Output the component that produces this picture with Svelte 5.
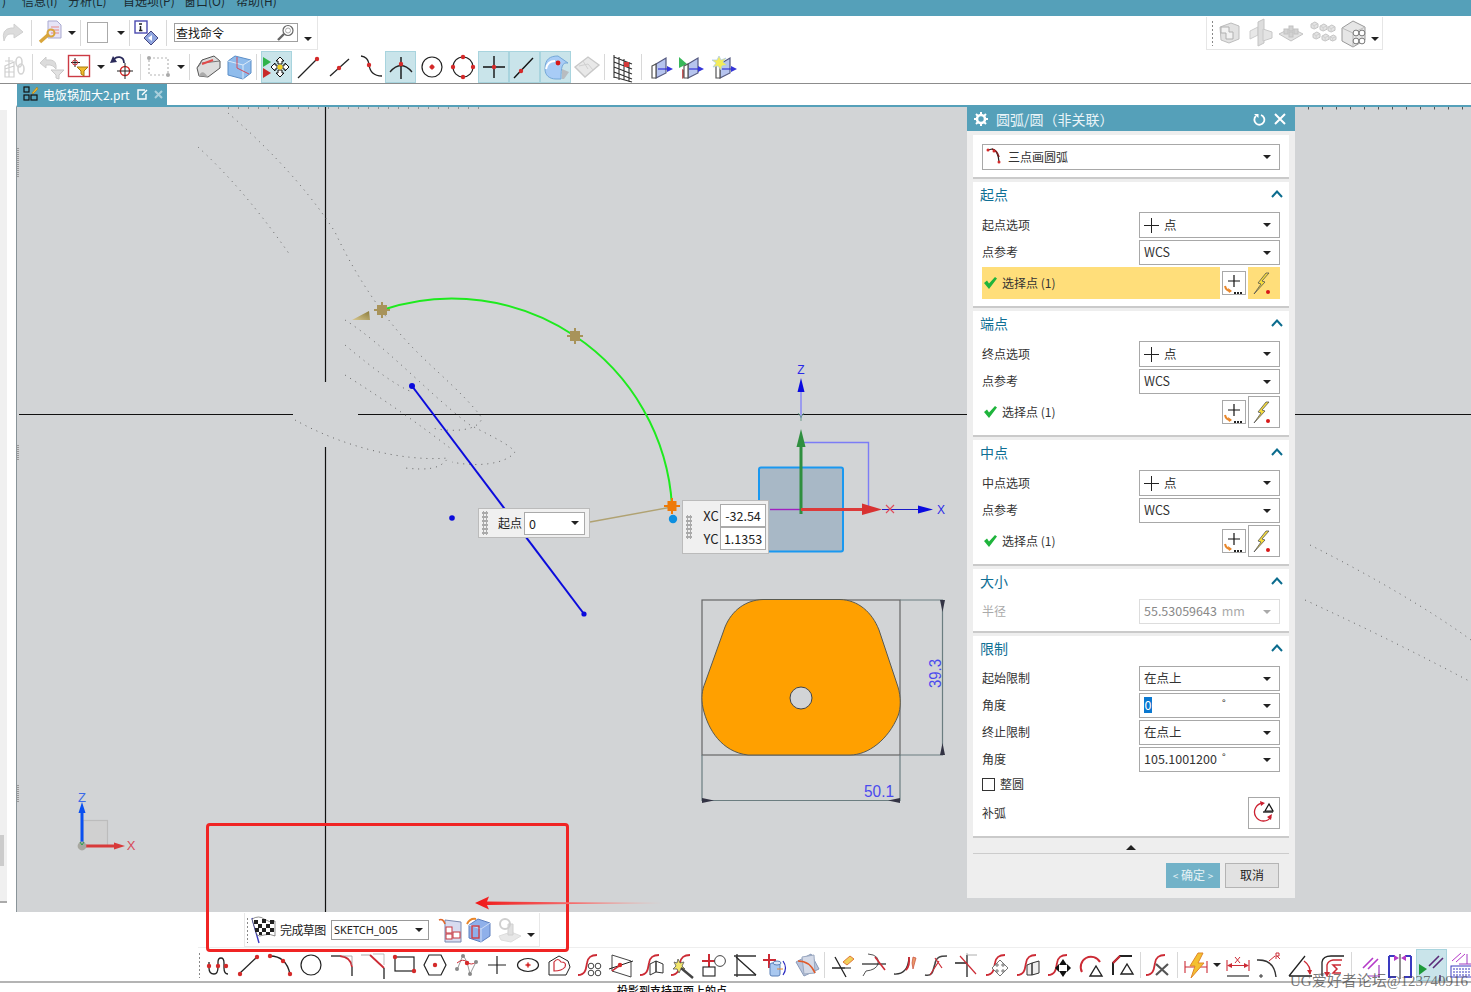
<script>
  const dot = (x, y, r = 2.2, c = '#d42a2a') => `<circle cx="${x}" cy="${y}" r="${r}" fill="${c}"/>`;
  const ln = (d, c = '#222', w = 1.3) => `<path d="${d}" fill="none" stroke="${c}" stroke-width="${w}"/>`;
  const red = '#cc2b35';
  const scurve = (x = 0) => ln(`M${x},22 C${x + 8},22 ${x + 8},15 ${x + 9},10 C${x + 10},4 ${x + 13},2 ${x + 19},2`, red, 1.8);
  const gcube = (x, y, s) => `<path d="M${x},${y + s * .3} L${x + s * .55},${y} L${x + s},${y + s * .25} V${y + s * .75} L${x + s * .45},${y + s} L${x},${y + s * .8}Z" fill="#e4e4e4" stroke="#c4c4c4"/><path d="M${x},${y + s * .3} L${x + s * .45},${y + s * .5} L${x + s},${y + s * .25} M${x + s * .45},${y + s * .5} V${y + s}" fill="none" stroke="#cfcfcf"/>`;
  const panel = (x) => `<path d="M${x},9 L${x + 10},3 V18 L${x},23Z" fill="#b6c4ee" stroke="#555a80" stroke-width="1.2"/><path d="M${x - 4},11 L${x},9 V23 H${x - 4}Z" fill="#fff" stroke="#555" stroke-width="1.2"/>`;
  const blueArrow = (x) => `<path d="M${x},14 H${x + 11}" stroke="#3535d8" stroke-width="1.2"/><path d="M${x + 9},11 L${x + 15},14 L${x + 9},17Z" fill="#3535d8"/>`;
  const tri = (x, y) => `<path d="M${x},${y} L${x + 6},${y + 10} H${x - 6}Z" fill="none" stroke="#222" stroke-width="1.4"/>`;

  const icons = {
    undo: `<path d="M3,20 Q0,8 10,7 H13 V3 L22,11 L13,17 V13 H9 Q5,13 3,20Z" fill="#dcdcdc" stroke="#d0d0d0"/>`,
    wrench: `<path d="M10,0H19L23,4V17H10Z" fill="#e6e4f6" stroke="#a9a9d0"/><path d="M13,6h8M13,9h8M13,12h8" stroke="#e88a8a"/>` + ln('M2,21 L11,13', '#d9a63c', 3.4) + `<circle cx="13" cy="12" r="3.5" fill="none" stroke="#d9a63c" stroke-width="2"/>`,
    blank: `<rect x="1.5" y="1.5" width="20" height="20" fill="#fff" stroke="#aaa"/>`,
    info: `<rect x="0" y="0" width="12" height="12" fill="#fff" stroke="#4a4ab0" stroke-width="1.4"/><path d="M4,3h3M5.5,5v4M4,9.5h3.4" stroke="#222" stroke-width="1.5"/><path d="M9,17 L16,10 L23,17 L16,24Z" fill="#8ea4de" stroke="#46467f"/><path d="M17,14 L13,17 L17,20Z" fill="#fff"/>`,
    hand: ln('M2,11 L11,7 V22 L2,22Z M2,17 H11 M6,9 V22 M2,14 L11,11', '#cfcfcf', 1.2) + ln('M6,2 V9 M2,6 H10', '#cfcfcf', 1.2) + `<ellipse cx="16" cy="7" rx="3" ry="5" fill="none" stroke="#d4d4d4" stroke-width="1.6"/><ellipse cx="18" cy="14" rx="3" ry="5" fill="none" stroke="#d4d4d4" stroke-width="1.6"/>`,
    undofun: `<path d="M0,8 L6,2 V5 H11 Q17,6 16,14 Q13,10 10,10 H6 V13Z" fill="#dcdcdc" stroke="#cdcdcd"/><path d="M11,15 H24 L19,20 V24 L16,23 V20Z" fill="#e2e2e2" stroke="#c8c8c8"/>`,
    filter: `<rect x="-0.5" y="0.5" width="21" height="21" fill="#fff" stroke="#cc3a44" stroke-width="1.4"/><path d="M6,3V12M2,7.5H11" stroke="#222"/><circle cx="6" cy="7.5" r="2.5" fill="none" stroke="#cc2b35"/><path d="M8,12 H19 L15,16 V21 L12,19 V16Z" fill="#f0bc2e" stroke="#a97a10"/>`,
    rotate: ln('M3,6 C6,0 14,1 14,8', '#2a2a5a', 1.8) + `<path d="M0,8 L3,1 L7,7Z" fill="#2a2a5a"/><circle cx="15" cy="16" r="4.6" fill="none" stroke="#d42a2a" stroke-width="1.5"/><path d="M15,8V24M7,16H23" stroke="#222"/>`,
    dashed: `<rect x="2" y="3" width="19" height="17" fill="none" stroke="#b5b5b5" stroke-width="1.2" stroke-dasharray="2 2"/>` + dot(2, 3, 2, '#aaa') + dot(21, 20, 2, '#aaa'),
    box: `<path d="M1,13 L6,5 L18,1 L24,6 V13 L12,22 L3,21Z" fill="#dcdcdc" stroke="#555"/><path d="M1,13 Q5,9 6,5 M6,8 L24,6" fill="none" stroke="#777"/><path d="M6,9 L17,5" stroke="#e24a4a" stroke-width="2"/><path d="M3,21 Q6,13 12,22" fill="#aaa"/>`,
    bcube: `<path d="M1,6 L8,1 L24,5 V18 L16,24 L1,20Z" fill="#8fbcec" stroke="#5b8ec8"/><path d="M1,6 L16,10 L24,5 M16,10 V24" fill="none" stroke="#dbeaf8"/><path d="M10,2 V13 L22,19" fill="none" stroke="#d44a5a"/>`,
    select: `<path d="M-2,2 L6,7 L-2,12Z" fill="#2fb34a"/><path d="M-2,13 L6,18 L-2,23Z" fill="#c82a2a"/><path d="M15,2 L19,6 H17 V9 H13 V6 H11Z M15,22 L19,18 H17 V15 H13 V18 H11Z M6,12 L10,8 V10 H12 V14 H10 V16Z M24,12 L20,8 V10 H18 V14 H20 V16Z" fill="#fff" stroke="#111"/>` + dot(15, 12, 2.6, '#f2d020'),
    lineEnd: ln('M2,23 L20,5') + dot(21, 4, 2.2),
    lineMid: ln('M3,21 L22,4') + dot(12, 13, 2.2),
    curve: ln('M3,1 Q10,2 11,9 Q12,21 24,21') + dot(11, 10, 2.2),
    arcTop: ln('M1,17 Q12,4 23,17') + ln('M12,2 V24', '#111', 1.4) + dot(12, 9, 2.2),
    circleC: `<circle cx="12" cy="12" r="10" fill="none" stroke="#222" stroke-width="1.2"/>` + dot(12, 12, 2.2) + ln('M12,9V15M9,12H15', '#d42a2a', .8),
    circle4: `<circle cx="12" cy="12" r="10" fill="none" stroke="#222" stroke-width="1.2"/>` + dot(12, 2, 2.2) + dot(12, 22, 2.2) + dot(2, 12, 2.2) + dot(22, 12, 2.2),
    cross: ln('M12,1V23M1,12H23', '#111', 1.4) + dot(12, 12, 2.2),
    lineAct: ln('M1,23 L20,3', '#111', 1.4) + dot(8, 16, 2.2),
    surface: `<path d="M1,14 C1,4 6,1 14,1 L24,8 C18,7 17,12 17,24 H12 C5,24 1,20 1,14Z" fill="#a8ccf6" stroke="#74a8d8"/><path d="M18,24 V14 L25,17 L20,24Z" fill="#b8bcc0"/><circle cx="14" cy="8" r="2.4" fill="#d81818"/><path d="M2,14 C3,8 7,6 11,6" stroke="#fff" stroke-width="2" fill="none"/>`,
    mesh: `<path d="M0,12 L13,2 L24,10 L10,22Z" fill="#e8e8e8" stroke="#c8c8c8" stroke-width="1.4"/><path d="M4,11 L13,9 L18,15 M8,6 L13,14" stroke="#d0d0d0" fill="none"/>`,
    grid: ln('M4,2 L22,9 M4,7 L22,14 M4,12 L22,19 M4,17 L22,24 M4,22 L22,27 M4,0 V23 M9,2 V25 M14,4 V25 M19,7 V27', '#333', 1.1) + `<rect x="14" y="7" width="5" height="5" fill="#d43a3a"/>`,
    move1: panel(6) + blueArrow(8),
    move2: `<path d="M0,2 L8,9 L0,13Z" fill="#38b85a"/><path d="M3,14 L11,18 L3,24Z" fill="#c85a5a"/>` + panel(9) + blueArrow(10),
    move3: panel(9) + `<path d="M8,1 L10,5 L15,3 L12,7 L16,10 L11,11 L10,15 L7,11 L2,12 L5,8 L1,5 L6,5Z" fill="#f4ec5a" stroke="#a8c8e8" stroke-width=".7"/>` + blueArrow(11),
    block1: `<path d="M2,6 L13,2 L21,5 V18 L11,22 L3,19Z" fill="#e2e2e2" stroke="#bdbdbd"/><path d="M3,6 H11 V11 L15,11 V18 L8,18 V12 H3Z" fill="#f2f2f2" stroke="#b0b0b0"/>`,
    block2: `<path d="M2,10 L10,6 V14 L2,18Z" fill="#e8e8e8" stroke="#ccc"/><path d="M10,1 L16,-2 V22 L10,25Z" fill="#ddd" stroke="#c4c4c4"/><path d="M15,8 L24,11 V17 L15,20Z" fill="#e4e4e4" stroke="#c8c8c8"/>`,
    block3: `<path d="M0,13 L12,7 L24,13 L12,20Z" fill="#e2e2e2" stroke="#c4c4c4"/>` + [[7, 8], [12, 5], [17, 8], [12, 11]].map(([x, y]) => `<rect x="${x - 2}" y="${y}" width="4" height="5" fill="#d2d2d2" stroke="#c2c2c2"/>`).join(''),
    block4: gcube(1, 1, 7) + gcube(10, 3, 7) + gcube(18, 4, 7) + gcube(3, 11, 7) + gcube(12, 13, 7) + gcube(20, 14, 6),
    block5: `<path d="M0,7 L11,0 L23,6 V19 L11,26 L0,20Z" fill="#e6e6e6" stroke="#999"/><path d="M0,7 L11,12 L23,6 M11,12 V26" fill="none" stroke="#bbb"/>` + [[14, 12], [20, 12], [14, 20], [20, 20]].map(([x, y]) => `<circle cx="${x}" cy="${y}" r="2.9" fill="#fff" stroke="#777"/>`).join(''),
    flag: `<path d="M1,2 L8,27" stroke="#3a3ac0" stroke-width="1.4"/><path d="M1,3 Q8,-1 13,3 T24,5 L24,20 Q18,17 13,19 T6,19Z" fill="#fff" stroke="#222" stroke-width=".5"/><path d="M3,4h4v4h-4zM11,3h4v4h-4zM19,4h4v4h-4zM7,8h4v4h-4zM15,8h4v4h-4zM4,12h4v4h-4zM11,12h4v4h-4zM19,12h4v4h-4zM8,16h3v3h-3zM15,16h4v3h-4z" fill="#222"/>`,
    map: `<path d="M8,2 L24,4 V24 H8Z" fill="#d8dcf0" stroke="#7a8ab0"/><rect x="9" y="9" width="6" height="6" fill="#fff" stroke="#c8343c"/><rect x="9" y="16" width="6" height="5" fill="#fff" stroke="#c8343c"/><rect x="16" y="14" width="7" height="6" fill="#fff" stroke="#c8343c"/><path d="M2,2 Q6,0 8,6" stroke="#e0662a" stroke-width="1.6" fill="none"/>`,
    cube3: `<path d="M2,7 L11,1 L23,5 V18 L14,24 L2,20Z" fill="#8fb0ea" stroke="#5e80c0"/><path d="M2,7 L14,11 L23,5 M14,11 V24" stroke="#cddcf6" fill="none"/><rect x="5" y="8" width="7" height="12" fill="none" stroke="#d43a3a" stroke-width="1.3"/><path d="M0,6 Q3,0 9,1" stroke="#e8862a" stroke-width="2" fill="none"/>`,
    gray3: `<path d="M2,18 L14,14 L24,18 L14,24 L4,22Z" fill="#e8e8e8" stroke="#ddd"/><path d="M11,6 H16 V17 H11Z" fill="#e0e0e0" stroke="#d0d0d0"/><circle cx="8" cy="6" r="5" fill="none" stroke="#cfcfcf" stroke-width="2"/>`,
    profile: ln('M3,9 V15 Q3,21 8,21 Q12,21 12,14 V9 Q12,5 15,5 Q18,5 18,10 V15 Q18,21 22,21', '#222', 1.3) + dot(3, 13) + dot(12, 13) + dot(20, 13),
    line: ln('M2,21 L20,4') + dot(3, 21) + dot(20, 4),
    arc: ln('M2,3 Q18,3 22,21') + dot(2, 3) + dot(15, 8) + dot(22, 21),
    circle: `<circle cx="12" cy="12" r="10" fill="none" stroke="#222" stroke-width="1.2"/>`,
    fillet: ln('M1,3 H10', '#222', 1.3) + ln('M10,3 Q21,4 22,14', red, 1.8) + ln('M22,14 V23', '#222', 1.3) + ln('M13,3 H22 V12', '#999', .8),
    chamfer: ln('M0,2 H9', '#bbb', 1.3) + ln('M9,2 L23,15', red, 1.8) + ln('M23,15 V26', '#222', 1.3) + ln('M12,1 H23 V12', '#aaa', .8),
    rect: `<rect x="3" y="4" width="19" height="14" fill="none" stroke="#222" stroke-width="1.2"/>` + dot(3, 4) + dot(22, 18),
    hex: `<path d="M6,2 H18 L23,12 L18,22 H6 L1,12Z" fill="none" stroke="#222" stroke-width="1.2"/>` + dot(12, 12),
    spline: ln('M3,17 L9,2 L13,9 L16,21 L22,9', '#999', 1) + ln('M3,10 Q9,5 13,9 T22,9', red, 1) + dot(9, 3, 2, '#888') + dot(3, 16, 2, '#888') + dot(16, 21, 2, '#888') + dot(22, 9, 2, '#888') + dot(13, 10),
    plus: ln('M12,3 V21 M3,12 H21', '#222', 1.2),
    ellipse: `<ellipse cx="12" cy="12" rx="10.5" ry="6.5" fill="none" stroke="#222" stroke-width="1.2"/>` + dot(12, 12, 1.8) + ln('M12,9V15M9,12H15', '#d42a2a', .8),
    conic: `<path d="M2,22 V9 L12,3 L21,8 L23,14 L19,22Z" fill="none" stroke="#222"/><path d="M7,9 Q11,4 14,9 Q20,9 18,14 Q15,18 7,18Z" fill="none" stroke="#cc2b35" stroke-width="1.2"/>`,
    s4: scurve(0) + [[13, 13], [20, 13], [13, 20], [20, 20]].map(([x, y]) => `<circle cx="${x}" cy="${y}" r="2.8" fill="#fff" stroke="#444"/>`).join(''),
    plane: `<path d="M3,2 L22,8 V24 L3,18Z" fill="none" stroke="#444"/>` + ln('M0,16 L24,8', '#222', 1) + ln('M3,18 Q8,14 12,12', red, 1.4) + dot(11, 12),
    sbox: scurve(0) + `<path d="M10,11 L16,8 V19 L10,22Z M16,8 L23,11 V20 L16,19Z" fill="#fff" stroke="#333"/>`,
    swand: scurve(0) + `<path d="M7,6 L9,10 L13,9 L11,13 L14,16 L10,16 L8,20 L6,16 L2,16 L5,13 L3,9 L6,10Z" fill="#f2e66a" stroke="#555" stroke-width=".8"/>` + ln('M10,15 L22,25', '#444', 2.4),
    pcr: ln('M7,1 V15 M0,8 H14', red, 2) + `<circle cx="18" cy="8" r="5.4" fill="#fff" stroke="#444"/><rect x="1" y="14" width="12" height="9" fill="#fff" stroke="#222" stroke-width="1.1"/>`,
    tback: ln('M1,3 H23 M1,22 H23 M4,1 V24', '#333', 1.3) + ln('M3,4 L23,22', '#222', 1.3),
    pcyl: ln('M5,1 V15 M-1,7 H12', red, 2) + `<rect x="6" y="10" width="10" height="13" rx="2" fill="#a9c8f0" stroke="#5a80b8"/><ellipse cx="13" cy="10" rx="4" ry="2" fill="#d8e6f8" stroke="#5a80b8"/><path d="M19,8 Q24,15 19,22" stroke="#2828c0" stroke-width="1.2" fill="none"/><path d="M13,16 H19" stroke="#e8862a"/>`,
    wrap: `<path d="M1,9 L16,1 L24,16 L9,23Z" fill="#b8c4dc" stroke="#8a9ab8"/><path d="M7,4 L19,2 L20,20 L9,21Z" fill="#d4dae8" stroke="#9aa8c0"/><path d="M3,8 Q15,8 20,20" stroke="#e05a2a" stroke-width="1.6" fill="none"/>`,
    trim: ln('M1,15 H14 M4,4 L15,24', '#222', 1.3) + ln('M14,15 H20', '#222', 1) + `<path d="M12,9 L19,3 L23,6 L16,12Z" fill="#f0cf5a" stroke="#e0783a"/>`,
    extend: ln('M6,1 Q18,2 16,11 Q14,17 4,18 L1,23', '#555', 1) + ln('M0,11 H24', '#222', 1.2) + ln('M13,4 L23,17', red, 1.6),
    mini: ln('M1,21 Q15,22 16,4', '#333', 1.3) + ln('M16,4 Q17,13 13,17', red, 1.8) + `<path d="M20,4 L23,5 L20,16 L19,10Z" fill="#e89a6a" stroke="#c84a3a" stroke-width=".7"/>`,
    ext2: ln('M1,22 C10,24 9,15 11,11 C12,4 16,3 23,3', '#444', 1.6) + ln('M6,22 L15,8 M11,5 L18,15', red, 1.2),
    inter: ln('M12,2 V24 M0,10 H12', '#222', 1.3) + ln('M12,2 H22 M12,2 V0', '#999', .8) + ln('M5,3 L21,21', red, 1.2),
    smove: scurve(0) + `<path d="M14,7 L18,11 H16 V13 H18 V11 L22,15 L18,19 V17 H16 V19 H18 L14,23 L10,19 H12 V17 H10 V19 L6,15 L10,11 V13 H12 V11 H10Z" fill="#fff" stroke="#777"/>`,
    scopy: scurve(0) + `<path d="M10,12 L15,10 V22 H10Z M15,10 L22,8 V20 L15,22Z" fill="#eee" stroke="#333"/>`,
    srot: scurve(0) + `<path d="M15,6 L19,12 H11Z M15,24 L19,18 H11Z M7,15 L11,11 V19Z M23,15 L19,11 V19Z" fill="#111"/>`,
    atri: `<path d="M3,19 A10,10 0 1 1 21,9" fill="none" stroke="${red}" stroke-width="2"/>` + tri(17, 13),
    cham2: ln('M3,22 V10 L10,3 H22', '#222', 2) + ln('M3,10 L10,3', red, 2) + tri(17, 11),
    sx: scurve(0) + ln('M10,11 L22,22 M10,22 L22,11', '#555', 2.2),
    bolt: ln('M1,8 V20 M23,8 V20 M1,14 H23', red, 1.1) + `<path d="M14,0 L6,13 H11 L7,25 L20,10 H14 L19,0Z" fill="#f4c030" stroke="#e0862a"/>`,
    dimx: ln('M1,7 V18 M23,7 V18 M3,12.5 H21', red, 1.1) + ln('M1,23 H23', '#333', 1.2) + `<path d="M1,12.5 L6,10 V15Z M23,12.5 L18,10 V15Z" fill="#cc2b35"/>` + ln('M9,4 L14,10 M14,4 L9,10', red, 1),
    radius: ln('M1,7 Q18,6 20,24', '#333', 1.4) + ln('M13,8 L19,3', red, 1) + ln('M3,23 H7 M5,21 V25', '#333', 1) + ln('M20,0 V6 M20,0 H23 V3 H20 M21,3 L24,6', red, 1),
    angle: ln('M1,23 L17,3 M1,23 H24', '#222', 1.3) + ln('M16,8 Q23,13 22,21', red, 1.4) + `<path d="M22,22 L19,17 L24,17Z" fill="#cc2b35"/>`,
    sigma: ln('M2,23 V9 Q3,3 11,3 H24', '#222', 1.3) + ln('M7,22 V12 Q8,8 13,7 H22', red, 1.4) + ln('M21,12 H13 L17,16 L13,20 H21', red, 1.5) + `<path d="M7,24 L4,19 H10Z" fill="#cc2b35"/>`,
    parallel: ln('M5,15 L15,5 M10,16 L20,6', '#b53ac8', 1.6) + ln('M10,23 H22 M21,12 V23', '#a03ac0', 1.2) + ln('M21,23 V25', '#222', 1),
    perp: ln('M1,3 V24 H8 M1,3 H7 M23,3 V24 H16 M23,3 H17', '#3a3ac0', 2) + ln('M12,1 V26', '#222', 1) + `<path d="M6,2 L11,5 L6,8Z M18,2 L13,5 L18,8Z" fill="#b53ac8"/>`,
    sketchA: `<path d="M-1,11 L7,16 L-1,22Z" fill="#1e9a3a"/>` + ln('M9,13 L19,3 M13,15 L23,5', '#5a2a78', 1.6) + ln('M20,22 V28', '#5a2a78', 1.4),
    key: ln('M1,8 L10,0 M5,9 L14,1', '#b53ac8', 1) + ln('M8,11 H20 M16,1 V11', '#a03ac0', 1) + `<rect x="0" y="13" width="24" height="11" fill="#fff" stroke="#3a3ac0"/><path d="M2,16h20M2,19h20M2,22h20" stroke="#3a3ac0" stroke-dasharray="2 1"/>`,
    arcSel: ln('M1,2 L5,1 Q11,2 12,14', '#222', 1.2) + ln('M5,1 Q10,2 12,9', '#7a1c1c', 1.6) + dot(1, 2, 1.5) + dot(7, 3, 1.5) + dot(12, 14, 1.5),
    check: `<path d="M0,6 L3,3.5 L5,6.5 L11,0 L13,1.5 L5,12Z" fill="#1fb43c"/>`,
    addp: ln('M9,1 V13 M3,7 H15', '#111', 1.2) + `<path d="M0,12 Q1,17 6,17" stroke="#e8862a" stroke-width="2" fill="none"/><path d="M3,14 L7,17 L4,19Z" fill="#e8862a"/>` + `<path d="M9,18h2v2h-2zM12,18h2v2h-2zM15,18h2v2h-2z" fill="#222"/>`,
    bolt2: `<path d="M12,0 L4,10 L7,11 L0,21 L11,9 L8,8 L15,0Z" fill="#f6dc3a" stroke="#555" stroke-width=".8"/>` + dot(14, 19, 2, '#d81818'),
    comp: `<path d="M11,2 A9,9 0 1 0 19,16" fill="none" stroke="#cc2030" stroke-width="1.3"/><path d="M8,0 L13,2 L9,5Z M15,16 L20,13 L19,19Z" fill="#cc2030"/><path d="M13,10 L17,3 L21,10Z" fill="none" stroke="#111" stroke-width="1.2"/><path d="M11,11 H21" stroke="#111" stroke-width="1.3"/>`,
    tabI: `<rect x="0" y="0" width="5" height="5" fill="none" stroke="#111" stroke-width="1.2"/><rect x="0" y="8" width="5" height="5" fill="none" stroke="#111" stroke-width="1.2"/><rect x="7" y="8" width="6" height="5" fill="none" stroke="#111" stroke-width="1.2"/><path d="M8,6 L13,0 L14,2 L9,7Z" fill="#e8b830" stroke="#a87010" stroke-width=".5"/>`,
    mag: `<circle cx="11" cy="6.5" r="5" fill="#fff" stroke="#666" stroke-width="1.2"/><circle cx="11" cy="6.5" r="2.5" fill="none" stroke="#aaa"/>` + ln('M7,10 L1,16', '#666', 2.4)
  };

  const row1 = [['undo', 26], ['s', 10], ['wrench', 28], ['dd', 16], ['s', 1], ['blank', 34], ['dd', 12], ['s', 4], ['info', 32], ['s', 6]];
  const row2 = [['hand', 30], ['s', 5], ['undofun', 34], ['filter', 24], ['dd', 16], ['rotate', 26], ['s', 10], ['dashed', 28], ['dd', 16], ['s', 1], ['box', 36], ['bcube', 26], ['s', 9],
    ['select', 31, 1], ['lineEnd', 31], ['lineMid', 31], ['curve', 31], ['arcTop', 31, 1], ['circleC', 31], ['circle4', 31], ['cross', 31, 1], ['lineAct', 31, 1], ['surface', 31, 1], ['mesh', 31],
    ['s', 5], ['grid', 30], ['s', 8], ['move1', 34], ['move2', 24], ['move3', 40]];
  const rightTools = [['block1', 31], ['block2', 30], ['block3', 31], ['block4', 32], ['block5', 32], ['dd', 10]];
  const finishTools = [['map', 30], ['cube3', 30], ['gray3', 30], ['dd', 14]];
  const sketchTools = [['profile', 31], ['line', 31], ['arc', 31], ['circle', 31], ['fillet', 31], ['chamfer', 31], ['rect', 31], ['hex', 31], ['spline', 31], ['plus', 31], ['ellipse', 31], ['conic', 31], ['s4', 31], ['plane', 31], ['sbox', 31], ['swand', 31], ['pcr', 31], ['tback', 31], ['pcyl', 31], ['wrap', 31],
    ['s', 5], ['trim', 31], ['extend', 31], ['mini', 31], ['ext2', 31], ['inter', 31], ['smove', 31], ['scopy', 31], ['srot', 31], ['atri', 31], ['cham2', 31],
    ['s', 6], ['sx', 29], ['s', 10], ['bolt', 28], ['dd', 14], ['dimx', 28], ['radius', 31], ['angle', 34], ['sigma', 30], ['s', 8], ['parallel', 29], ['perp', 32], ['sketchA', 31, 1], ['key', 31]];

  // label, slot width so the items land where the real menu has them
  const menus = [['信息(I)', 46], ['分析(L)', 55], ['首选项(P)', 61], ['窗口(O)', 52], ['帮助(H)', 40]];
  const pointSections = [
    { title: '起点', option: '起点选项', hot: true },
    { title: '端点', option: '终点选项' },
    { title: '中点', option: '中点选项' }
  ];
</script>

{#snippet icon(name, size = 24)}
  <svg class="icon" width={size} height={size} viewBox="0 0 {size} {size}">{@html icons[name]}</svg>
{/snippet}

{#snippet tools(items)}
  {#each items as [name, width, active]}
    {#if name === 's'}
      <span class="sep" style="width:{width}px"></span>
    {:else if name === 'dd'}
      <span class="dd" style="width:{width}px"><i class="caret"></i></span>
    {:else}
      <span class="tool" class:active style="width:{width}px">{@render icon(name)}</span>
    {/if}
  {/each}
{/snippet}

{#snippet sel(text, cross = false, short = true)}
  <div class="sel" class:tall={!short}>
    {#if cross}<span class="cross"></span>{/if}
    <span class="val">{text}</span>
    <i class="caret"></i>
  </div>
{/snippet}

{#snippet head(title)}
  <div class="head"><span>{title}</span>
    <svg width="12" height="8" viewBox="0 0 12 8"><path d="M1,7 L6,1.5 L11,7" fill="none" stroke="#0b6c8e" stroke-width="2"/></svg>
  </div>
{/snippet}

<div class="app">
  <div class="menu">
    <span class="stub">)</span>
    {#each menus as [m, w]}<span style="width:{w}px">{m}</span>{/each}
  </div>

  <div class="row1">
    <div class="group left">
      {@render tools(row1)}
      <div class="search"><span>查找命令</span><span class="mag">{@render icon('mag', 18)}</span></div>
      <span class="dd low"><i class="caret"></i></span>
    </div>
    <div class="group right">
      <span class="grip"></span>
      {@render tools(rightTools)}
    </div>
  </div>

  <div class="row2">{@render tools(row2)}</div>

  <div class="tabs">
    <div class="tab">
      {@render icon('tabI', 15)}
      <span class="tabname">电饭锅加大2.prt</span>
      <svg width="11" height="11" viewBox="0 0 11 11"><path d="M8,1 H1 V10 H9 V5" fill="none" stroke="#fff" stroke-width="1.4"/><path d="M5,6 L10,1" stroke="#fff" stroke-width="1.4"/></svg>
      <svg class="tabx" width="9" height="9" viewBox="0 0 9 9"><path d="M1,1 L8,8 M8,1 L1,8" stroke="#a9cfdc" stroke-width="2"/></svg>
    </div>
  </div>

  <div class="main">
    <div class="side"><div class="sidepanel"><b></b></div></div>
    <div class="view">
      <svg class="canvas" width="1454" height="805" viewBox="17 107 1454 805">
        <defs>
          <linearGradient id="cone" x1="0" x2="1" y1="1" y2="0"><stop offset="0" stop-color="#d8c890"/><stop offset="1" stop-color="#8a7a3a"/></linearGradient>
        </defs>
        <path d="M228,108 H485" stroke="#555" stroke-dasharray="1 9"/>
        <path d="M1308,108 H1471" stroke="#555" stroke-width="3" stroke-dasharray="1 13"/>
        <!-- sketch axes -->
        <path d="M19,414.5 H293 M358,414.5 H1471 M325.5,107 V382 M325.5,447 V912" stroke="#111" stroke-width="1.2"/>
        <path d="M18,148 V178 M18,445 V460 M18,785 V802" stroke="#999" stroke-width="2" stroke-dasharray="1 1"/>

        <!-- faded reference curves -->
        <g fill="none" stroke="#666" stroke-width="1" stroke-dasharray="1 5">
          <path d="M228,113 C262,142 305,185 335,232 C355,275 385,320 415,350 C440,375 465,395 482,418 C478,432 450,432 432,428"/>
          <path d="M198,147 C232,178 262,215 290,255"/>
          <path d="M345,320 C385,345 430,395 470,425 C495,438 510,445 515,452 C505,465 475,467 452,462"/>
          <path d="M345,345 C375,370 395,385 412,392"/>
          <path d="M295,420 C340,445 400,462 448,458 C440,470 425,470 405,468"/>
          <path d="M345,375 C385,400 420,425 450,448"/>
          <path d="M1310,545 C1370,575 1430,610 1471,640"/>
          <path d="M1305,600 C1370,630 1420,655 1471,682"/>
        </g>

        <!-- construction line -->
        <path d="M412,386 L584,614" stroke="#0b0bdc" stroke-width="2"/>
        <circle cx="412" cy="386" r="3" fill="#0b0bdc"/>
        <circle cx="584" cy="614" r="2.6" fill="#0b0bdc"/>
        <circle cx="452" cy="518" r="2.8" fill="#0b0bdc"/>

        <!-- arc being drawn -->
        <path d="M382,310 A220.3,220.3 0 0 1 575,336 A220.3,220.3 0 0 1 672,506" fill="none" stroke="#1eea1e" stroke-width="2"/>
        <path d="M590,522 L672,507" stroke="#b0a272" stroke-width="1.4"/>
        <path d="M352,320 L369,311 L370,320Z" fill="url(#cone)"/>
        <g fill="#a8935a">
          <path d="M377,305h10v10h-10zM381,302h2v16h-2zM374,309h16v2h-16z"/>
          <path d="M570,331h10v10h-10zM574,328h2v16h-2zM567,335h16v2h-16z"/>
        </g>
        <path d="M667.500,501h9v10h-9zM671,498h2v16h-2zM664,505h16v2h-16z" fill="#ee7a08"/>
        <circle cx="673" cy="519" r="4.200" fill="#0d8fe0"/>

        <!-- drag handles on the origin -->
        <rect x="759" y="467.500" width="84" height="84" rx="2" fill="#a8b8c6" stroke="#1a98f0" stroke-width="2"/>
        <path d="M801,442.500 H868.500 V509" fill="none" stroke="#7c7cf6" stroke-width="1.400"/>
        <path d="M770,509.500 H801" stroke="#a020c0" stroke-width="1.400"/>
        <path d="M801,418 V392" stroke="#9b9bee" stroke-width="2"/>
        <path d="M797.500,392 L801,378 L804.500,392Z" fill="#0a0ae0"/>
        <path d="M801,514 V445" stroke="#2f8f3f" stroke-width="3"/>
        <path d="M796.500,447 L801,429 L805.500,447Z" fill="#2f8f3f"/>
        <path d="M801,509.500 H868" stroke="#dc3a3a" stroke-width="3"/>
        <path d="M862,503.500 L882,509.500 L862,515Z" fill="#d83232"/>
        <path d="M882,509.500 H920" stroke="#1a1ac8" stroke-width="1.200"/>
        <path d="M918,505.500 L933,509.500 L918,513.500Z" fill="#0a0ae0"/>
        <path d="M886,505 L894,513 M894,505 L886,513" stroke="#e04a5a" stroke-width="1.200"/>
        <path d="M798,413 L801,417 L804,413 M801,417 V421" fill="none" stroke="#6a9a8a" stroke-width="1"/>
        <text x="801" y="374" class="axis blue">Z</text>
        <text x="941" y="514" class="axis blue">X</text>

        <!-- profile and its dimensions -->
        <rect x="702" y="600" width="198" height="155" fill="none" stroke="#666" stroke-width="1.200"/>
        <path d="M763,599.500 H840 C858,600 872,612 879,630 L898,687 C901,697 901,708 898,716 C888,740 868,755 850,755 H748 C722,752 708,730 703,708 C701,698 702,690 705,683 L725,627 C732,610 746,600 763,599.500Z" fill="#ffa000" stroke="#5a5a50" stroke-width="1"/>
        <circle cx="801" cy="698" r="11" fill="#d2d4d6" stroke="#444" stroke-width="1"/>
        <path d="M900,600 H942.500 V755 H900 M702,755 V800.500 H900 V755" fill="none" stroke="#6b7d80" stroke-width="1.200"/>
        <path d="M940,600 h5 l-2.500,12Z M940,755 h5 l-2.500,-12Z M702,798 v5 l12,-2.500Z M900,798 v5 l-12,-2.500Z" fill="#334"/>
        <text class="dim" x="864" y="797" textLength="30" lengthAdjust="spacingAndGlyphs">50.1</text>
        <text class="dim" transform="translate(941,688) rotate(-90)" textLength="29" lengthAdjust="spacingAndGlyphs">39.3</text>

        <!-- wcs triad -->
        <rect x="83" y="820.500" width="24.500" height="25" fill="#d0d0d0" stroke="#bcbcbc" stroke-width="1.200"/>
        <path d="M82,846 V810" stroke="#0a50f0" stroke-width="3"/>
        <path d="M78.500,813 L82,802 L85.500,813Z" fill="#0a50f0"/>
        <path d="M82,846 H117" stroke="#d83a3a" stroke-width="3"/>
        <path d="M114,842.500 L125,846 L114,849.500Z" fill="#d83a3a"/>
        <circle cx="82" cy="846" r="4.400" fill="#a8a8a0"/>
        <path d="M80,842 L82,845 L84,842" fill="none" stroke="#2aa04a"/>
        <text x="82" y="802" class="axis small">Z</text>
        <text x="131" y="850" class="axis smallred">X</text>
      </svg>

      <div class="pop startpop">
        <span class="gripv"></span>
        <span class="poplab">起点</span>
        <div class="popinput wide"><span>0</span><i class="caret"></i></div>
      </div>

      <div class="pop xypop">
        <span class="gripv"></span>
        <div class="xy">
          <div class="xyrow"><span class="poplab">XC</span><div class="popinput">-32.54</div></div>
          <div class="xyrow"><span class="poplab">YC</span><div class="popinput">1.1353</div></div>
        </div>
      </div>

      <div class="dialog">
        <div class="title">
          <svg width="16" height="16" viewBox="0 0 16 16"><circle cx="8" cy="8" r="4" fill="none" stroke="#fff" stroke-width="2.600"/><path d="M8,1 V4 M8,12 V15 M1,8 H4 M12,8 H15 M3,3 L5,5 M11,11 L13,13 M13,3 L11,5 M5,11 L3,13" stroke="#fff" stroke-width="2"/></svg>
          <span class="tname">圆弧/圆（非关联）</span>
          <svg class="refresh" width="13" height="13" viewBox="0 0 13 13"><path d="M3,3 A5,5 0 1 0 8,2" fill="none" stroke="#fff" stroke-width="1.800"/><path d="M1,1 L5.500,1 L5.500,5Z" fill="#fff"/></svg>
          <svg width="12" height="12" viewBox="0 0 12 12"><path d="M1,1 L11,11 M11,1 L1,11" stroke="#fff" stroke-width="2"/></svg>
        </div>

        <section class="sec first">
          <div class="sel tall full">
            <span class="selicon">{@render icon('arcSel', 16)}</span>
            <span class="val cjk">三点画圆弧</span>
            <i class="caret"></i>
          </div>
        </section>

        {#each pointSections as s}
          <section class="sec">
            {@render head(s.title)}
            <div class="rows">
              <div class="row"><span>{s.option}</span>{@render sel('点', true, false)}</div>
              <div class="row"><span>点参考</span>{@render sel('WCS')}</div>
              <div class="row pick">
                <div class="picked" class:hot={s.hot}>
                  <span class="chk">{@render icon('check', 14)}</span>
                  <span class="pname">选择点 (1)</span>
                </div>
                <div class="add">{@render icon('addp', 18)}</div>
                <div class="snap" class:hot={s.hot}>{@render icon('bolt2', 20)}</div>
              </div>
            </div>
          </section>
        {/each}

        <section class="sec">
          {@render head('大小')}
          <div class="rows">
            <div class="row off">
              <span>半径</span>
              <div class="sel dis"><span class="val">55.53059643 <em>mm</em></span><i class="caret"></i></div>
            </div>
          </div>
        </section>

        <section class="sec">
          {@render head('限制')}
          <div class="rows">
            <div class="row"><span>起始限制</span>{@render sel('在点上')}</div>
            <div class="row"><span>角度</span>
              <div class="sel"><span class="val num"><mark>0</mark><sup>°</sup></span><i class="caret"></i></div>
            </div>
            <div class="row"><span>终止限制</span>{@render sel('在点上')}</div>
            <div class="row"><span>角度</span>
              <div class="sel"><span class="val num"><b>105.1001200</b><sup>°</sup></span><i class="caret"></i></div>
            </div>
            <div class="row chkrow"><i class="box"></i><span>整圆</span></div>
            <div class="row pick"><span>补弧</span><div class="snap">{@render icon('comp', 24)}</div></div>
          </div>
        </section>

        <div class="more"><i></i></div>
        <div class="foot">
          <button class="ok"><small>&lt;</small> 确定 <small>&gt;</small></button>
          <button class="cancel">取消</button>
        </div>
      </div>
    </div>
  </div>

  <div class="bottom">
    <div class="finishrow">
      <div class="finish">
        <span class="grip"></span>
        <span class="flag">{@render icon('flag', 26)}</span>
        <span class="fin">完成草图</span>
        <div class="sketchsel"><span>SKETCH_005</span><i class="caret"></i></div>
        {@render tools(finishTools)}
      </div>
    </div>
    <div class="sketchrow">
      <span class="grip"></span>
      {@render tools(sketchTools)}
    </div>
    <div class="status">投影到支持平面上的点</div>
  </div>

  <div class="callout"></div>
  <svg class="callarrow" width="200" height="20" viewBox="470 893 200 20">
    <defs>
      <linearGradient id="fade" x1="0" x2="1" y1="0" y2="0"><stop offset="0" stop-color="#f01818"/><stop offset="0.500" stop-color="#f46a6a"/><stop offset="1" stop-color="#f4b0a8"/></linearGradient>
    </defs>
    <path d="M475,903 L489,896.500 L487,901.500 L663,903 L487,905 L489,909.500Z" fill="url(#fade)"/>
  </svg>
  <div class="mark">UG爱好者论坛@123740916</div>
</div>

<style>
  :global(body) {
    margin: 0;
    background: #fff;
  }
  .app {
    position: relative;
    width: 1471px;
    height: 992px;
    overflow: hidden;
    display: flex;
    flex-direction: column;
    background: #fff;
    color: #333;
    font-family: "Noto Sans CJK SC", "Noto Sans", sans-serif;
    font-size: 12px;
  }
  .icon {
    display: block;
    overflow: visible;
    flex: none;
  }
  .caret {
    display: block;
    flex: none;
    width: 0;
    height: 0;
    border-left: 4px solid transparent;
    border-right: 4px solid transparent;
    border-top: 4px solid #222;
  }

  /* top bars */
  .menu {
    height: 16px;
    flex: none;
    background: #55a0b9;
    display: flex;
    padding-left: 22px;
    overflow: hidden;
    font-size: 12px;
    line-height: 13px;
    color: #1a2a30;
  }
  .menu span {
    flex: none;
    margin-top: -6px;
    height: 13px;
    white-space: nowrap;
  }
  .menu .stub {
    position: absolute;
    left: 2px;
  }
  .row1 {
    height: 34px;
    flex: none;
    display: flex;
    justify-content: space-between;
    padding-right: 88px;
  }
  .group {
    display: flex;
    align-items: center;
    box-sizing: border-box;
    height: 34px;
    border-bottom: 1px solid #e6e6e6;
  }
  .group.left {
    width: 318px;
    border-right: 1px solid #e6e6e6;
  }
  .group.right {
    width: 177px;
    height: 33px;
    margin-top: 1px;
    border: 1px solid #e6e6e6;
    border-top: 0;
    padding-left: 4px;
  }
  .row2 {
    height: 33px;
    flex: none;
    display: flex;
    align-items: center;
    box-sizing: content-box;
    border-bottom: 1px solid #8c8c8c;
  }
  .tool {
    flex: none;
    height: 32px;
    display: flex;
    align-items: center;
    justify-content: center;
    box-sizing: border-box;
  }
  .tool.active {
    background: #c9e4ea;
    border: 1px solid #a8d4de;
  }
  .sep {
    flex: none;
    display: flex;
    justify-content: center;
  }
  .sep::before {
    content: "";
    flex: none;
    width: 1px;
    height: 26px;
    background: #d8d8d8;
  }
  .dd {
    flex: none;
    display: flex;
    justify-content: center;
  }
  .dd.low {
    width: 19px;
    margin-top: 12px;
  }
  .group.right .dd { margin-top: 12px; }
  .search {
    flex: none;
    width: 124px;
    height: 19px;
    margin-left: 5px;
    box-sizing: border-box;
    border: 1px solid #a0a0a0;
    display: flex;
    align-items: center;
    justify-content: space-between;
    padding: 0 2px 0 1px;
    color: #111;
    line-height: 17px;
  }
  .mag { width: 18px; height: 18px; }
  .grip {
    flex: none;
    width: 3px;
    height: 26px;
    background-image: radial-gradient(#888 0.8px, transparent 1px);
    background-size: 3px 4px;
  }

  /* document tab */
  .tabs {
    height: 21px;
    flex: none;
    padding-left: 17px;
  }
  .tab {
    width: 150px;
    height: 21px;
    box-sizing: border-box;
    background: #55a0b9;
    display: flex;
    align-items: center;
    padding-left: 7px;
    color: #fff;
    font-size: 12px;
  }
  .tabname {
    margin: 0 6px 0 4px;
    white-space: nowrap;
    width: 88px;
  }
  .tabx { margin-left: 6px; }

  .main {
    flex: 1;
    min-height: 0;
    display: flex;
  }
  .side {
    width: 17px;
    flex: none;
    box-sizing: border-box;
    border-right: 1px solid #8a9499;
    border-top: 2px solid #fff;
  }
  .sidepanel {
    width: 7px;
    height: 793px;
    margin-top: 3px;
    background: #f0f0f0;
    border-bottom: 2px solid #aaa;
    box-sizing: border-box;
    padding-top: 725px;
  }
  .sidepanel b {
    display: block;
    width: 4px;
    height: 31px;
    background: #ccc;
  }
  .view {
    position: relative;
    flex: 1;
    min-width: 0;
    box-sizing: border-box;
    border-top: 2px solid #55a0b9;
    background: #d2d4d6;
  }
  .canvas {
    position: absolute;
    left: 0;
    top: 0;
    display: block;
  }
  .axis {
    font-family: "Liberation Sans", sans-serif;
    font-size: 12px;
    text-anchor: middle;
  }
  .axis.blue { fill: #2a2ae8; }
  .axis.small { fill: #3a6ae8; font-size: 13px; }
  .axis.smallred { fill: #d84a5a; font-size: 13px; }
  .dim {
    font-family: "Liberation Sans", sans-serif;
    font-size: 16px;
    fill: #4a4aee;
  }

  /* on-screen inputs */
  .pop {
    position: absolute;
    box-sizing: border-box;
    background: #f0f0f0;
    border: 1px solid #bbb;
    display: flex;
    align-items: center;
    color: #222;
  }
  .startpop {
    left: 461px;
    top: 401px;
    width: 112px;
    height: 30px;
    padding-left: 3px;
  }
  .xypop {
    left: 665px;
    top: 393px;
    width: 87px;
    height: 54px;
    padding-left: 3px;
  }
  .gripv {
    flex: none;
    width: 6px;
    height: 24px;
    background-image: radial-gradient(#aaa 1.2px, transparent 1.4px);
    background-size: 3px 4px;
  }
  .startpop .poplab {
    margin-left: 10px;
    margin-top: -1px;
  }
  .poplab { width: 27px; flex: none; }
  .popinput {
    box-sizing: border-box;
    width: 46px;
    height: 23px;
    background: #fff;
    border: 1px solid #aaa;
    display: flex;
    align-items: center;
    justify-content: center;
    font-size: 12.5px;
  }
  .popinput.wide {
    width: 61px;
    height: 23px;
    justify-content: space-between;
    padding: 0 5px 0 4px;
    margin-left: -1px;
  }
  .xy { margin-left: 10px; }
  .xyrow {
    display: flex;
    align-items: center;
    height: 24px;
    margin-top: -1px;
  }
  .xyrow .poplab {
    width: 18px;
    text-align: center;
    font-size: 13px;
  }

  /* dialog */
  .dialog {
    position: absolute;
    left: 950px;
    top: -2px;
    width: 328px;
    height: 793px;
    box-sizing: border-box;
    padding: 0 6px;
    background: #eee;
    display: flex;
    flex-direction: column;
  }
  .title {
    height: 26px;
    margin: 0 -6px 4px;
    padding: 2px 9px 0 6px;
    box-sizing: border-box;
    background: #55a0b9;
    color: #e9f4f8;
    display: flex;
    align-items: center;
    gap: 6px;
    font-size: 14px;
  }
  .tname {
    flex: 1;
    margin-left: 1px;
    margin-top: -1px;
    white-space: nowrap;
  }
  .refresh { margin-right: 2px; }
  .sec {
    background: #fff;
    box-sizing: border-box;
    border-bottom: 2px solid #cacaca;
    margin-bottom: 3px;
    padding: 0 9px 7px;
    flex: none;
  }
  .sec.first { padding-top: 9px; }
  .head {
    height: 30px;
    margin: 0 -3px 0 -2px;
    display: flex;
    align-items: center;
    justify-content: space-between;
    color: #0f6f94;
    font-size: 14px;
    padding-bottom: 7px;
    box-sizing: border-box;
  }
  .rows {
    display: flex;
    flex-direction: column;
    gap: 2px;
  }
  .row {
    display: flex;
    align-items: center;
    justify-content: space-between;
  }
  .row > span { margin-top: -2px; }
  .row.off { color: #aaa; }
  .sel {
    width: 141px;
    height: 25px;
    flex: none;
    box-sizing: border-box;
    border: 1px solid #a8a8a8;
    background: #fff;
    display: flex;
    align-items: center;
    padding: 0 8px 0 4px;
    gap: 5px;
    color: #333;
  }
  .sel.tall { height: 26px; }
  .sel.full {
    width: 298px;
    padding-left: 4px;
  }
  .sel.dis {
    border-color: #ddd;
    color: #888;
  }
  .sel.dis .caret { border-top-color: #aaa; }
  .sel.dis em {
    font-style: normal;
    color: #aaa;
    margin-left: 2px;
  }
  .val {
    flex: 1;
    white-space: nowrap;
    font-size: 12.5px;
    margin-top: -2px;
  }
  .val.cjk { font-size: 12px; }
  .selicon { width: 16px; height: 16px; margin-top: -3px; }
  .cross {
    position: relative;
    flex: none;
    width: 15px;
    height: 15px;
    background:
      linear-gradient(#222, #222) center / 15px 1px no-repeat,
      linear-gradient(#222, #222) center / 1px 15px no-repeat;
  }
  .val.num {
    display: flex;
    line-height: 16px;
  }
  .val.num mark {
    background: #0a78d0;
    color: #fff;
    width: 8px;
    margin-right: 70px;
    text-align: center;
  }
  .val.num b {
    font-weight: 400;
    width: 78px;
  }
  .val.num sup {
    font-size: 10px;
    line-height: 12px;
  }
  .pick { height: 32px; }
  .picked {
    flex: 1;
    height: 32px;
    margin-right: 2px;
    display: flex;
    align-items: center;
    gap: 4px;
    padding-left: 2px;
  }
  .picked.hot { background: #ffde7a; }
  .chk { width: 14px; height: 14px; margin-top: 1px; }
  .pname { margin-top: -2px; }
  .add {
    flex: none;
    width: 24px;
    height: 24px;
    margin-right: 2px;
    box-sizing: border-box;
    border: 1px solid #a8a8a8;
    background: #fff;
    display: flex;
    align-items: center;
    justify-content: center;
  }
  .snap {
    flex: none;
    width: 32px;
    height: 32px;
    box-sizing: border-box;
    border: 1px solid #a8a8a8;
    background: #fff;
    display: flex;
    align-items: center;
    justify-content: center;
  }
  .snap.hot {
    background: #ffde7a;
    border-color: #ffde7a;
  }
  .chkrow {
    height: 21px;
    justify-content: flex-start;
    gap: 5px;
  }
  .box {
    display: block;
    width: 13px;
    height: 13px;
    box-sizing: border-box;
    border: 1px solid #333;
    background: #fff;
  }
  .more {
    height: 8px;
    margin-top: -3px;
    border-bottom: 1px solid #ccc;
    display: flex;
    justify-content: center;
    padding-top: 7px;
    box-sizing: content-box;
  }
  .more i {
    display: block;
    width: 0;
    height: 0;
    border-left: 5px solid transparent;
    border-right: 5px solid transparent;
    border-bottom: 5px solid #222;
  }
  .foot {
    display: flex;
    justify-content: flex-end;
    gap: 5px;
    padding: 0 10px 0 0;
    margin-top: 9px;
  }
  .foot button {
    width: 54px;
    height: 25px;
    font: inherit;
    padding: 0 0 2px;
    box-sizing: border-box;
  }
  .ok {
    background: #72b2c8;
    color: #e6f2f6;
    border: 0;
  }
  .ok small { font-size: 10px; }
  .cancel {
    background: #e2e2e2;
    border: 1px solid #b4b4b4;
    color: #222;
  }

  /* bottom bars */
  .bottom {
    height: 80px;
    flex: none;
    display: flex;
    flex-direction: column;
  }
  .finishrow {
    height: 35px;
    flex: none;
    padding: 1px 0 0 244px;
    box-sizing: border-box;
  }
  .finish {
    width: 296px;
    height: 34px;
    box-sizing: border-box;
    border: 1px solid #e8e8e8;
    border-top: 0;
    display: flex;
    align-items: center;
    padding-left: 1px;
  }
  .finish .dd { margin-top: 10px; }
  .flag { flex: none; width: 26px; height: 26px; margin: -2px 1px 0 2px; }
  .fin {
    flex: none;
    color: #222;
    white-space: nowrap;
    width: 51px;
    margin-left: 2px;
    margin-top: -1px;
    letter-spacing: -.6px;
  }
  .sketchsel {
    flex: none;
    width: 98px;
    height: 20px;
    margin-right: 5px;
    box-sizing: border-box;
    border: 1px solid #999;
    display: flex;
    align-items: center;
    justify-content: space-between;
    padding: 0 5px 0 2px;
    font-family: "Noto Sans", sans-serif;
    font-size: 11px;
    color: #222;
  }
  .sketchrow {
    height: 34px;
    flex: none;
    box-sizing: border-box;
    margin-left: 198px;
    display: flex;
    align-items: center;
    border-top: 1px solid #eee;
  }
  .sketchrow .grip {
    margin-right: 1px;
    width: 3px;
  }
  .status {
    border-top: 2px solid #b4b4b4;
    padding-left: 617px;
    height: 9px;
    font-size: 11px;
    line-height: 15px;
    font-weight: 500;
    color: #111;
    overflow: hidden;
  }

  /* overlays */
  .callout {
    position: absolute;
    left: 206px;
    top: 823px;
    width: 363px;
    height: 129px;
    box-sizing: border-box;
    border: 3px solid #f02424;
    border-radius: 4px;
  }
  .callarrow {
    position: absolute;
    left: 470px;
    top: 893px;
  }
  .mark {
    position: absolute;
    left: 1290px;
    top: 969px;
    font-family: "Liberation Serif", "Noto Sans CJK SC", serif;
    font-size: 15px;
    color: rgba(70, 70, 70, .72);
    white-space: nowrap;
  }
</style>
